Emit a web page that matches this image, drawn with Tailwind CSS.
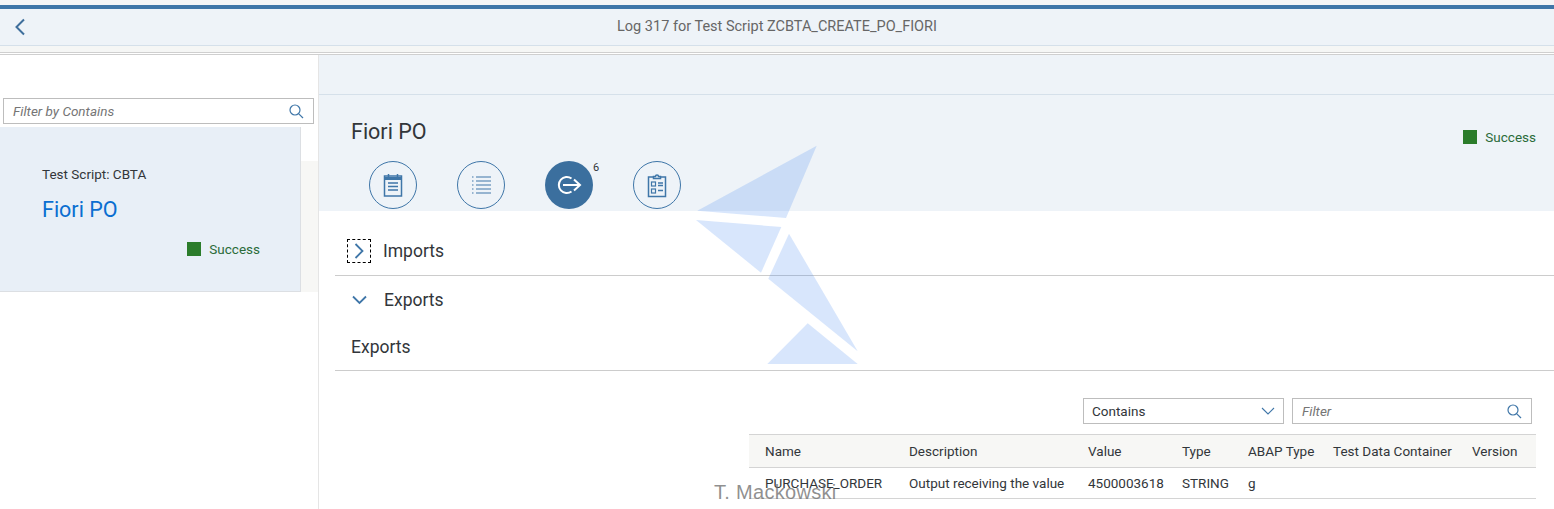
<!DOCTYPE html>
<html lang="en">
<head>
<meta charset="utf-8">
<title>Log 317</title>
<script src="https://cdn.jsdelivr.net/npm/@tailwindcss/browser@4"></script>
</head>
<body class="bg-white">
<div class="relative w-[1554px] h-[509px] overflow-hidden flex flex-col font-['Roboto',sans-serif] text-[#32363a] bg-white">
  <div class="h-[5px] bg-[#f4f5f6]"></div>
  <div class="h-[4px] bg-[#3f76a8]"></div>
  <header class="h-[37px] shrink-0 flex items-center bg-[#eef3f8] border-b border-[#d5e0ea] relative">
    <svg class="ml-[14px] w-[12px] h-[18px]" viewBox="0 0 12 18" fill="none" stroke="#3f6f9c" stroke-width="2"><path d="M10 1.500L2.500 9l7.500 7.500"/></svg>
    <div class="absolute inset-x-0 text-center text-[14.500px] text-[#666]">Log 317 for Test Script ZCBTA_CREATE_PO_FIORI</div>
  </header>
  <div class="h-[7px] shrink-0 bg-[#f5f6f5] border-b border-[#cfcfcf]"></div>
  <div class="h-px shrink-0 bg-white"></div>
  <div class="flex-1 flex min-h-0 border-t border-[#cfcfcf]">
    <aside class="w-[319px] shrink-0 border-r border-[#e5e5e5] flex flex-col bg-white">
      <div class="mt-[43px] ml-[3px] w-[311px] h-[26px] border border-[#bdbdbd] flex items-center justify-between pl-[9px] pr-[9px] bg-white">
        <span class="italic text-[13.500px] text-[#757575]">Filter by Contains</span>
        <svg class="w-[15px] h-[15px]" viewBox="0 0 15 15" fill="none" stroke="#3f76a8" stroke-width="1.200"><circle cx="6" cy="6" r="5"/><path d="M9.800 9.800L14 14"/></svg>
      </div>
      <div class="mt-[3px] h-[165px] flex">
        <div class="w-[301px] bg-[#e8eff7] border-r border-b border-[#dcdfe3] pl-[42px] pt-[38px] flex flex-col">
          <div class="text-[13.500px] leading-[18px]">Test Script: CBTA</div>
          <div class="mt-[14px] text-[21.500px] leading-[26px] text-[#0a6ed1] [color:#1471ad]">Fiori PO</div>
          <div class="mt-[17px] mr-[40px] flex items-center justify-end gap-[8px]">
            <span class="w-[14px] h-[14px] bg-[#2b7c2b]"></span>
            <span class="text-[13.500px] leading-[18px] text-[#2b6b3a]">Success</span>
          </div>
        </div>
        <div class="w-[17px] flex flex-col">
          <div class="h-[34px] bg-white"></div>
          <div class="flex-1 bg-[#f7f7f5]"></div>
        </div>
      </div>
    </aside>
    <main class="flex-1 min-w-0 flex flex-col">
      <div class="h-[40px] shrink-0 bg-[#eef3f8] border-b border-[#d5e0ea]"></div>
      <section class="h-[116px] shrink-0 bg-[#eef3f8] pl-[32px] pr-[18px] relative">
        <div class="flex justify-between">
          <h1 class="mt-[24px] text-[21.500px] leading-[26px] font-normal">Fiori PO</h1>
          <div class="mt-[33px] flex items-center gap-[8px]">
            <span class="w-[14px] h-[14px] bg-[#2b7c2b]"></span>
            <span class="text-[13.500px] leading-[18px] text-[#2b6b3a]">Success</span>
          </div>
        </div>
        <div class="absolute left-[50px] top-[66px] flex gap-[40px]">
          <div class="w-[48px] h-[48px] rounded-full border border-[#3f76a8] flex items-center justify-center">
            <svg class="w-[20px] h-[24px]" viewBox="0 0 20 24" fill="none" stroke="#3f76a8" stroke-width="1.500"><rect x="1.500" y="3" width="17" height="20"/><path d="M1.500 5.500h17" stroke-width="3"/><path d="M5.500 1v3M14.500 1v3M5 10h10M5 13.500h10M5 17h10"/></svg>
          </div>
          <div class="w-[48px] h-[48px] rounded-full border border-[#3f76a8] flex items-center justify-center">
            <svg class="w-[20px] h-[20px]" viewBox="0 0 20 20" fill="none" stroke="#3f76a8" stroke-width="1.200"><path d="M5 2h15M5 6h15M5 10h15M5 14h15M5 18h15"/><path d="M1 2h2M1 6h2M1 10h2M1 14h2M1 18h2" stroke-dasharray="1.500 1"/></svg>
          </div>
          <div class="relative w-[48px] h-[48px] rounded-full bg-[#3b6f9e] flex items-center justify-center">
            <svg class="w-[26px] h-[20px]" viewBox="0 0 26 20" fill="none" stroke="#ffffff" stroke-width="2"><path d="M15.500 3.500A8 8 0 1 0 15.500 16.500"/><path d="M7 10h17M18 4.500L24 10l-6 5.500"/></svg>
            <span class="absolute left-[48px] top-0 text-[11px] leading-[14px]">6</span>
          </div>
          <div class="w-[48px] h-[48px] rounded-full border border-[#3f76a8] flex items-center justify-center">
            <svg class="w-[20px] h-[25px]" viewBox="0 0 20 25" fill="none" stroke="#3f76a8" stroke-width="1.500"><path d="M6 4H1.500v19.500h17V4H14"/><path d="M6.500 5.500V3.500h2a1.500 1.500 0 0 1 3 0h2v2z"/><rect x="4.500" y="9" width="4" height="4" stroke-width="1.200"/><rect x="4.500" y="16" width="4" height="4" stroke-width="1.200"/><path d="M11 10h5M11 12.500h5M11 17.500h5"/></svg>
          </div>
        </div>
      </section>
      <div class="ml-[16px] mt-[16px] h-[49px] shrink-0 flex items-center border-b border-[#cccccc]">
        <div class="ml-[12px] w-[24px] h-[24px] border border-dashed border-black flex items-center justify-center">
          <svg class="w-[10px] h-[16px]" viewBox="0 0 10 16" fill="none" stroke="#3f76a8" stroke-width="1.800"><path d="M1.500 1l7 7-7 7"/></svg>
        </div>
        <span class="ml-[12px] text-[17.500px]">Imports</span>
      </div>
      <div class="ml-[16px] h-[48px] shrink-0 flex items-center">
        <svg class="ml-[17px] w-[15px] h-[10px]" viewBox="0 0 15 10" fill="none" stroke="#3f76a8" stroke-width="1.800"><path d="M1 1.500l6.500 6.500 6.500-6.500"/></svg>
        <span class="ml-[17px] text-[17.500px]">Exports</span>
      </div>
      <div class="ml-[16px] h-[47px] shrink-0 flex items-center border-b border-[#cccccc]">
        <span class="ml-[16px] text-[17.500px]">Exports</span>
      </div>
      <div class="mt-[27px] flex justify-end gap-[8px] pr-[22px]">
        <div class="w-[201px] h-[26px] border border-[#bdbdbd] flex items-center justify-between pl-[8px] pr-[8px]">
          <span class="text-[13.500px]">Contains</span>
          <svg class="w-[14px] h-[8px]" viewBox="0 0 14 8" fill="none" stroke="#3f76a8" stroke-width="1.100"><path d="M1 1l6 6 6-6"/></svg>
        </div>
        <div class="w-[240px] h-[26px] border border-[#bdbdbd] flex items-center justify-between pl-[9px] pr-[9px]">
          <span class="italic text-[13.500px] text-[#757575]">Filter</span>
          <svg class="w-[15px] h-[15px]" viewBox="0 0 15 15" fill="none" stroke="#3f76a8" stroke-width="1.200"><circle cx="6" cy="6" r="5"/><path d="M9.800 9.800L14 14"/></svg>
        </div>
      </div>
      <div class="mt-[10px] ml-[430px] mr-[18px]">
        <div class="h-[34px] grid grid-cols-[144px_179px_94px_66px_85px_139px_1fr] items-center pl-[16px] bg-[#f7f7f5] border-t border-b border-[#d4d4d4] text-[13.500px]">
          <span>Name</span><span>Description</span><span>Value</span><span>Type</span><span>ABAP Type</span><span>Test Data Container</span><span>Version</span>
        </div>
        <div class="h-[31px] grid grid-cols-[144px_179px_94px_66px_85px_139px_1fr] items-center pl-[16px] border-b border-[#d4d4d4] text-[13.500px]">
          <span>PURCHASE_ORDER</span><span>Output receiving the value</span><span>4500003618</span><span>STRING</span><span>g</span><span></span><span></span>
        </div>
      </div>
    </main>
  </div>
  <svg class="absolute left-0 top-0 pointer-events-none" width="1554" height="509" viewBox="0 0 1554 509" fill="#3c82f0" fill-opacity=".2">
    <polygon points="816.700,145.700 697.300,210.700 786,218"/>
    <polygon points="696,220 781.300,227 761,272.700"/>
    <polygon points="789,233.700 857.700,351.300 768.300,278.700"/>
    <polygon points="807.700,323.300 857.700,364 767.300,364"/>
  </svg>
  <div class="absolute left-[714px] top-[480px] text-[20px] leading-[24px] font-['Liberation_Sans',sans-serif] text-[#6b6b6b]/75 tracking-[0.300px]">T. Mackowski</div>
</div>
</body>
</html>
